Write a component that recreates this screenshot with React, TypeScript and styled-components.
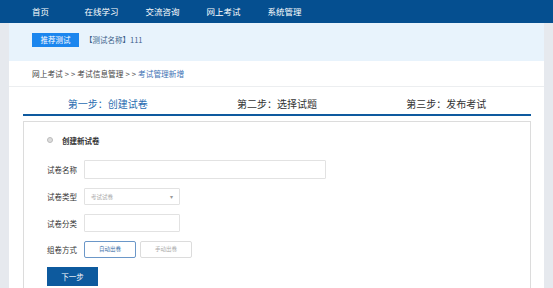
import React from 'react';
import styled, { createGlobalStyle } from 'styled-components';

const GlobalStyle = createGlobalStyle`
  html, body {
    margin: 0;
    padding: 0;
    background: #e6e9ee;
    font-family: "Noto Sans CJK SC", "Liberation Sans", sans-serif;
    overflow: hidden;
  }
`;

const navItems = ['首页', '在线学习', '交流咨询', '网上考试', '系统管理'];
const steps = ['第一步：创建试卷', '第二步：选择试题', '第三步：发布考试'];

const App: React.FC = () => {
  return (
    <Page>
      <GlobalStyle />
      <NavBar>
        {navItems.map((item) => (
          <NavItem key={item}>{item}</NavItem>
        ))}
      </NavBar>
      <Main>
        <Banner>
          <TagButton>推荐测试</TagButton>
          <BannerText>【测试名称】111</BannerText>
        </Banner>
        <Panel>
          <Breadcrumb>
            网上考试<Sep>&gt;&gt;</Sep>考试信息管理<Sep>&gt;&gt;</Sep>
            <Current>考试管理新增</Current>
          </Breadcrumb>
          <StepRow>
            {steps.map((s, i) => (
              <Step key={s} $active={i === 0}>
                {s}
              </Step>
            ))}
          </StepRow>
          <FormBox>
            <FormTitle>
              <Dot />
              创建新试卷
            </FormTitle>
            <Field $h={19}>
              <Label>试卷名称</Label>
              <Input $w={242} />
            </Field>
            <Field $h={17}>
              <Label>试卷类型</Label>
              <Select>
                <span>考试试卷</span>
                <Caret>▾</Caret>
              </Select>
            </Field>
            <Field $h={18}>
              <Label>试卷分类</Label>
              <Input $w={96} />
            </Field>
            <Field $h={17}>
              <Label>组卷方式</Label>
              <ModeButtons>
                <ModeButton $active>自动出卷</ModeButton>
                <ModeButton>手动出卷</ModeButton>
              </ModeButtons>
            </Field>
            <NextButton>下一步</NextButton>
          </FormBox>
        </Panel>
      </Main>
    </Page>
  );
};

const Page = styled.div`
  width: 553px;
  height: 288px;
  overflow: hidden;
`;

const NavBar = styled.div`
  height: 23px;
  background: #054f90;
  display: flex;
  align-items: center;
  padding-left: 10px;
`;

const NavItem = styled.div`
  width: 61px;
  text-align: center;
  color: #fff;
  font-size: 8.5px;
  line-height: 23px;
`;

const Main = styled.div`
  margin: 0 9px;
`;

const Banner = styled.div`
  height: 38px;
  background: #e8f3fc;
  display: flex;
  align-items: flex-start;
  padding: 10px 0 0 23px;
  box-sizing: border-box;
`;

const TagButton = styled.div`
  width: 47px;
  height: 14px;
  background: #1c86ee;
  color: #fff;
  font-size: 7.5px;
  line-height: 14px;
  text-align: center;
`;

const BannerText = styled.div`
  margin-left: 6px;
  font-size: 7.5px;
  line-height: 14px;
  color: #3a5f8a;
`;

const Panel = styled.div`
  background: #fff;
  padding: 0 13px 0 14px;
  height: 227px;
`;

const Breadcrumb = styled.div`
  height: 26px;
  margin: 0 -13px 0 -14px;
  padding-left: 23px;
  box-sizing: border-box;
  border-bottom: 1px solid #eceef0;
  font-size: 7.7px;
  line-height: 26px;
  color: #444;
`;

const Sep = styled.span`
  letter-spacing: 2px;
  margin: 0 0 0 2px;
`;

const Current = styled.span`
  color: #3d72b4;
`;

const StepRow = styled.div`
  display: grid;
  grid-template-columns: repeat(3, 1fr);
  height: 27px;
  border-bottom: 2px solid #0e5a9f;
`;

const Step = styled.div<{ $active?: boolean }>`
  text-align: center;
  font-size: 10px;
  line-height: 33px;
  color: ${(p) => (p.$active ? '#2b6db1' : '#333')};
`;

const FormBox = styled.div`
  margin-top: 5px;
  border: 1px solid #dcdcdc;
  border-bottom: none;
  height: 200px;
  padding: 11px 0 0 23px;
  display: flex;
  flex-direction: column;
  align-items: flex-start;
`;

const FormTitle = styled.div`
  display: flex;
  align-items: center;
  font-size: 7.5px;
  font-weight: bold;
  color: #333;
  height: 14px;
  margin-bottom: 13px;
`;

const Dot = styled.span`
  width: 4px;
  height: 4px;
  border-radius: 50%;
  border: 1px solid #bbb;
  background: #ddd;
  margin-right: 9px;
`;

const Field = styled.div<{ $h: number }>`
  display: flex;
  align-items: center;
  height: ${(p) => p.$h}px;
  margin-bottom: 9px;
`;

const Label = styled.div`
  width: 37px;
  font-size: 7.5px;
  color: #333;
`;

const Input = styled.div<{ $w: number }>`
  width: ${(p) => p.$w}px;
  height: 100%;
  box-sizing: border-box;
  border: 1px solid #e2e2e2;
  border-radius: 1px;
`;

const Select = styled.div`
  width: 96px;
  height: 100%;
  box-sizing: border-box;
  border: 1px solid #e2e2e2;
  border-radius: 1px;
  display: flex;
  align-items: center;
  justify-content: space-between;
  padding: 0 6px;
  font-size: 5.5px;
  color: #aaa;
`;

const Caret = styled.span`
  font-size: 6px;
  color: #999;
`;

const ModeButtons = styled.div`
  display: flex;
  gap: 4px;
  height: 100%;
`;

const ModeButton = styled.div<{ $active?: boolean }>`
  width: 52px;
  height: 100%;
  box-sizing: border-box;
  border: 1px solid ${(p) => (p.$active ? '#6b97c8' : '#dcdcdc')};
  border-radius: 2px;
  color: ${(p) => (p.$active ? '#3c6fa8' : '#aaa')};
  font-size: 5.5px;
  line-height: 15px;
  text-align: center;
`;

const NextButton = styled.div`
  width: 51px;
  height: 19px;
  background: #0d5a9e;
  color: #fff;
  font-size: 7.5px;
  line-height: 19px;
  text-align: center;
`;

export default App;
